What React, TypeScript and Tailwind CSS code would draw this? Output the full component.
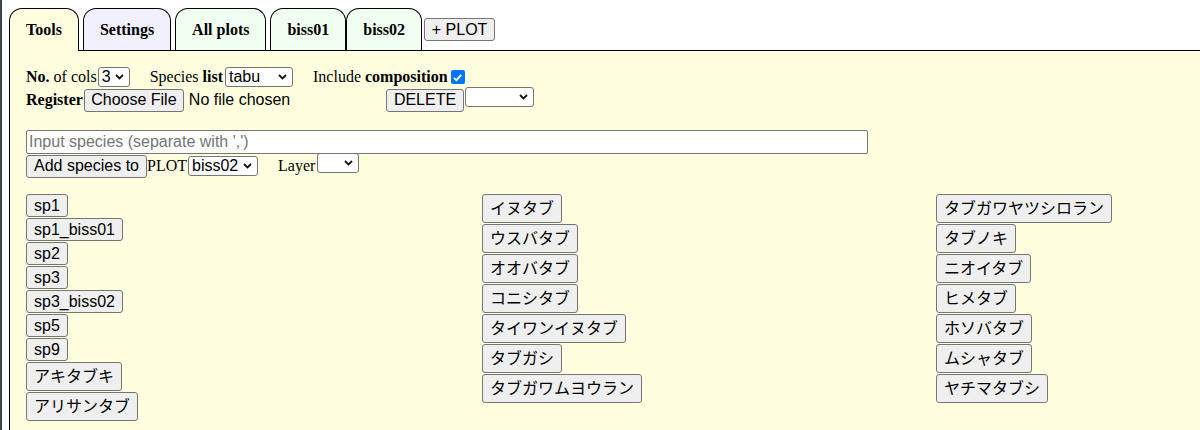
import React from 'react';

const serif = "font-['Liberation_Serif',serif]";
const sans = "font-['Liberation_Sans','Noto_Sans_CJK_JP',sans-serif]";

const col1 = ['sp1', 'sp1_biss01', 'sp2', 'sp3', 'sp3_biss02', 'sp5', 'sp9', 'アキタブキ', 'アリサンタブ'];
const col2 = ['イヌタブ', 'ウスバタブ', 'オオバタブ', 'コニシタブ', 'タイワンイヌタブ', 'タブガシ', 'タブガワムヨウラン'];
const col3 = ['タブガワヤツシロラン', 'タブノキ', 'ニオイタブ', 'ヒメタブ', 'ホソバタブ', 'ムシャタブ', 'ヤチマタブシ'];

const Chevron = () => (
  <svg width="9" height="6" viewBox="0 0 9 6" className="absolute right-[5px] top-1/2 -translate-y-1/2">
    <path d="M1 1 L4.5 4.5 L8 1" fill="none" stroke="#111" strokeWidth="1.8" />
  </svg>
);

const Select = ({ value, width }: { value?: string; width: string }) => (
  <span className={`relative inline-flex h-[20px] items-center rounded-[3px] border border-[#767676] bg-white pl-[3px] text-[16px] leading-none text-black ${sans} ${width}`}>
    {value}
    <Chevron />
  </span>
);

const Btn = ({ children, className = '' }: { children: React.ReactNode; className?: string }) => (
  <button className={`inline-flex h-[23px] shrink-0 items-center justify-center whitespace-nowrap rounded-[3px] border border-[#767676] bg-[#efefef] px-[7px] text-[16px] leading-none text-black ${sans} ${className}`}>
    {children}
  </button>
);

const SpeciesButton = ({ name }: { name: string }) => {
  const ascii = /^[\x00-\x7f]+$/.test(name);
  return (
    <button
      className={`inline-flex items-center whitespace-nowrap rounded-[3px] border border-[#767676] bg-[#efefef] px-[7px] text-[16px] leading-none text-black ${sans} ${ascii ? 'h-[23px]' : 'h-[29px]'}`}
    >
      {name}
    </button>
  );
};

const Tab = ({ label, bg, active, className = '' }: { label: string; bg: string; active?: boolean; className?: string }) => (
  <div
    className={`flex items-center whitespace-nowrap rounded-t-[13px] border-[1.5px] border-b-0 border-black px-[16px] text-[16px] font-bold text-black ${serif} ${bg} ${active ? 'relative z-10 -mb-px h-[43px]' : 'h-[42px]'} ${className}`}
  >
    {label}
  </div>
);

export default function App() {
  return (
    <div className="flex h-[430px] w-[1200px] overflow-hidden bg-white">
      <div className="w-[2px] shrink-0 bg-[#3a4350]" />
      <div className="w-[7px] shrink-0" />
      <div className="flex min-w-0 flex-1 flex-col">
        <div className="flex h-[50px] items-end pt-[8px]">
          <Tab label="Tools" bg="bg-[#ffffe0]" active />
          <Tab label="Settings" bg="bg-[#f0f0ff]" className="ml-[4px]" />
          <Tab label="All plots" bg="bg-[#f0fff0]" className="ml-[4px]" />
          <Tab label="biss01" bg="bg-[#f0fff0]" className="ml-[4px]" />
          <Tab label="biss02" bg="bg-[#f0fff0]" />
          <div className="mb-[9px] ml-[2px] self-end">
            <Btn className="w-[71px] px-[5px]">+ PLOT</Btn>
          </div>
        </div>

        <div className={`flex-1 border-l-[1.5px] border-t-[1.5px] border-black bg-[#ffffe0] pl-[16px] pt-[16px] text-[16px] text-black ${serif}`}>
          <div className="flex h-[20px] items-center">
            <span><b>No.</b> of cols</span>
            <span className="ml-[1px]"><Select value="3" width="w-[32px]" /></span>
            <span className="ml-[20px]">Species <b>list</b></span>
            <span className="ml-[2px]"><Select value="tabu" width="w-[68px]" /></span>
            <span className="ml-[20px]">Include <b>composition</b></span>
            <span className="ml-[3px] flex h-[14px] w-[14px] items-center justify-center rounded-[2px] bg-[#0075ff]">
              <svg width="11" height="11" viewBox="0 0 11 11">
                <path d="M2 5.8 L4.4 8.2 L9.2 2.8" fill="none" stroke="white" strokeWidth="1.8" />
              </svg>
            </span>
          </div>

          <div className="mt-[1px] flex h-[24px] items-center">
            <span className="flex w-[360px] items-center">
              <b>Register</b>
              <Btn className="ml-[1px] w-[100px]">Choose File</Btn>
              <span className={`ml-[5px] whitespace-nowrap ${sans}`}>No file chosen</span>
            </span>
            <Btn className="w-[78px]">DELETE</Btn>
            <span className="ml-[1px]"><Select width="w-[69px]" /></span>
          </div>

          <div className="mt-[18px] flex h-[24px] w-[842px] items-center rounded-[2px] border border-[#767676] bg-white pl-[2px]">
            <span className={`text-[16px] text-[#757575] ${sans}`}>Input species (separate with ',')</span>
          </div>

          <div className="flex h-[24px] items-center">
            <Btn className="w-[121px]">Add species to</Btn>
            <span>PLOT</span>
            <span className="ml-[1px]"><Select value="biss02" width="w-[70px]" /></span>
            <span className="ml-[20px]">Layer</span>
            <span className="ml-[2px]"><Select width="w-[42px]" /></span>
          </div>

          <div className="mt-[16px] grid grid-cols-[456px_454px_1fr]">
            {[col1, col2, col3].map((col, i) => (
              <div key={i} className="flex flex-col items-start gap-px">
                {col.map(name => (
                  <SpeciesButton key={name} name={name} />
                ))}
              </div>
            ))}
          </div>
        </div>
      </div>
    </div>
  );
}
